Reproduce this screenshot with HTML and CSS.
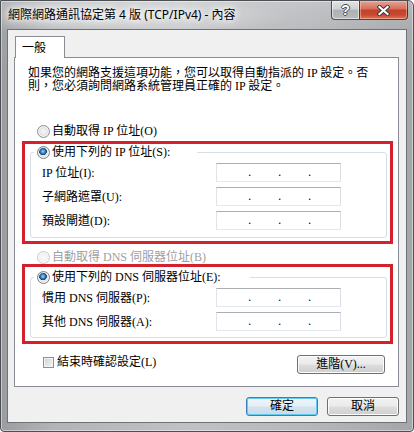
FILE: index.html
```html
<!DOCTYPE html>
<html lang="zh-Hant">
<head>
<meta charset="utf-8">
<title>網際網路通訊協定第 4 版 (TCP/IPv4) - 內容</title>
<link rel="stylesheet" href="styles.css">
</head>
<body>
<div class="window">
  <div class="titlebar">
    <div class="title">網際網路通訊協定第 4 版 (TCP/IPv4) - 內容</div>
    <div class="caption">
      <div class="cbtn help">?</div>
      <div class="cbtn close">
        <svg width="13" height="11" viewBox="0 0 13 11" aria-hidden="true">
          <path d="M2.5 2 L10.5 9 M10.5 2 L2.5 9" stroke="#3a3a3a" stroke-width="4.2" stroke-linecap="square" fill="none"/>
          <path d="M2.5 2 L10.5 9 M10.5 2 L2.5 9" stroke="#ffffff" stroke-width="2.2" stroke-linecap="square" fill="none"/>
        </svg>
      </div>
    </div>
  </div>
  <div class="client">
    <div class="tabs"><div class="tab">一般</div></div>
    <div class="panel">
      <p class="desc">如果您的網路支援這項功能，您可以取得自動指派的 IP 設定。否<br>則，您必須詢問網路系統管理員正確的 IP 設定。</p>

      <div class="opt first"><span class="radio"></span><span>自動取得 IP 位址(O)</span></div>

      <div class="mark mark-ip">
        <div class="group group-ip">
          <div class="legend legend-ip"><span class="radio on"></span><span>使用下列的 IP 位址(S):</span></div>
          <div class="fields">
            <span class="flabel">IP 位址(I):</span>
            <span class="ip"><span class="seg s1"></span><span class="dot">.</span><span class="seg"></span><span class="dot">.</span><span class="seg"></span><span class="dot">.</span><span class="seg"></span></span>
            <span class="flabel">子網路遮罩(U):</span>
            <span class="ip"><span class="seg s1"></span><span class="dot">.</span><span class="seg"></span><span class="dot">.</span><span class="seg"></span><span class="dot">.</span><span class="seg"></span></span>
            <span class="flabel">預設閘道(D):</span>
            <span class="ip"><span class="seg s1"></span><span class="dot">.</span><span class="seg"></span><span class="dot">.</span><span class="seg"></span><span class="dot">.</span><span class="seg"></span></span>
          </div>
        </div>
      </div>

      <div class="opt dns-auto disabled"><span class="radio"></span><span>自動取得 DNS 伺服器位址(B)</span></div>

      <div class="mark mark-dns">
        <div class="group group-dns">
          <div class="legend legend-dns"><span class="radio on"></span><span>使用下列的 DNS 伺服器位址(E):</span></div>
          <div class="fields">
            <span class="flabel">慣用 DNS 伺服器(P):</span>
            <span class="ip"><span class="seg s1"></span><span class="dot">.</span><span class="seg"></span><span class="dot">.</span><span class="seg"></span><span class="dot">.</span><span class="seg"></span></span>
            <span class="flabel">其他 DNS 伺服器(A):</span>
            <span class="ip"><span class="seg s1"></span><span class="dot">.</span><span class="seg"></span><span class="dot">.</span><span class="seg"></span><span class="dot">.</span><span class="seg"></span></span>
          </div>
        </div>
      </div>

      <div class="bottomrow">
        <div class="check"><span class="box"></span><span>結束時確認設定(L)</span></div>
        <div class="btn adv">進階(V)...</div>
      </div>
    </div>
    <div class="actions">
      <div class="btn default">確定</div>
      <div class="btn">取消</div>
    </div>
  </div>
</div>
</body>
</html>
```
FILE: styles.css
```css
* { box-sizing: border-box; }

html, body {
  margin: 0;
  padding: 0;
  background: #ffffff;
}

body {
  font-family: "Liberation Serif", "Noto Sans CJK TC", serif;
  font-size: 12px;
  color: #000;
}

/* ---------- window frame ---------- */
.window {
  width: 414px;
  height: 432px;
  display: flex;
  flex-direction: column;
  border: 1px solid #4c4f54;
  border-radius: 0 6px 4px 4px;
  background:
    radial-gradient(ellipse 170px 22px at 120px 15px, rgba(255,255,255,0.45), rgba(255,255,255,0) 100%),
    linear-gradient(180deg, rgba(255,255,255,0.2) 0px, rgba(255,255,255,0.05) 30px, rgba(255,255,255,0) 80px),
    linear-gradient(90deg, #9a9c9f 0%, #b1b3b6 12%, #bfc1c4 45%, #b5b7ba 75%, #a4a6a9 100%);
  box-shadow: inset 0 0 0 1px rgba(255,255,255,0.45);
  overflow: hidden;
}

.titlebar {
  height: 28px;
  flex: none;
  display: flex;
  justify-content: space-between;
  align-items: flex-start;
}

.title {
  margin: 6px 0 0 7px;
  font-family: "Noto Sans", "Noto Sans CJK TC", sans-serif;
  font-size: 12px;
  line-height: 16px;
  white-space: nowrap;
  color: #000;
  text-shadow: 0 0 5px #fff, 0 0 9px #fff, 0 0 13px rgba(255,255,255,0.8);
}

.caption {
  display: flex;
  margin-right: 5px;
  height: 19px;
}

.cbtn {
  height: 19px;
  display: flex;
  align-items: center;
  justify-content: center;
  border: 1px solid rgba(45,45,45,0.8);
  border-top: none;
}

.help {
  width: 28px;
  border-right: none;
  border-radius: 0 0 0 4px;
  background: linear-gradient(180deg, #e2e3e4 0%, #cfd1d3 45%, #aeb1b4 52%, #b9bcbf 100%);
  box-shadow: inset 0 0 0 1px rgba(255,255,255,0.55);
  color: #fff;
  font: bold 14px/17px "Liberation Sans", sans-serif;
  text-shadow: 1px 0 0 #4a4a4a, -1px 0 0 #4a4a4a, 0 1px 0 #4a4a4a, 0 -1px 0 #4a4a4a;
}

.close {
  width: 49px;
  border-radius: 0 0 4px 0;
  background: linear-gradient(180deg, #e3a395 0%, #d6725d 42%, #c2412b 52%, #c84a31 78%, #dc7a58 100%);
  box-shadow: inset 0 0 0 1px rgba(255,215,200,0.45);
}

.close svg { display: block; }

/* ---------- client area ---------- */
.client {
  flex: 1;
  margin: 0 6px 8px 6px;
  border: 1px solid #6e7176;
  background: #f0f0f0;
  display: flex;
  flex-direction: column;
  padding: 0 7px 6px 6px;
}

.tabs {
  display: flex;
  padding-top: 6px;
}

.tab {
  position: relative;
  z-index: 1;
  margin-left: 1px;
  margin-bottom: -1px;
  width: 50px;
  height: 22px;
  padding: 0 6px;
  border: 1px solid #898c95;
  border-bottom: none;
  background: #fff;
  font-family: "Noto Sans CJK TC", sans-serif;
  line-height: 20px;
}

.panel {
  border: 1px solid #898c95;
  background: #fff;
  padding: 9px 5px 12px 7px;
  display: flex;
  flex-direction: column;
}

.desc {
  margin: 0 0 0 6px;
  line-height: 13px;
  white-space: nowrap;
}

/* ---------- radio options ---------- */
.opt {
  display: flex;
  align-items: center;
  gap: 2px;
  height: 13px;
  line-height: 13px;
  padding-left: 15px;
  white-space: nowrap;
}

.opt.first { margin-top: 32px; }
.opt.dns-auto { margin-top: 7px; }
.opt.disabled { color: #a0a0a0; }

.radio {
  flex: none;
  width: 13px;
  height: 13px;
  border-radius: 50%;
  border: 1px solid #8f9091;
  background: radial-gradient(circle at 50% 50%, #f7f7f7 0, #e6e6e6 45%, #cfcfcf 100%);
  box-shadow: inset 0 0 0 1px rgba(255,255,255,0.7);
}

.radio.on {
  border-color: #7d8387;
  background:
    radial-gradient(circle at 45% 40%, #a8d4f5 0, #4c97d6 1.6px, #1c5d98 3px, #133f66 3.6px, rgba(19,63,102,0) 4.1px),
    radial-gradient(circle at 50% 50%, #f7f7f7 0, #e6e6e6 45%, #cfcfcf 100%);
}

.disabled .radio {
  border-color: #c9c9c9;
  background: radial-gradient(circle, #fafafa 0, #f0f0f0 60%, #e4e4e4 100%);
}

/* ---------- red annotation boxes ---------- */
.mark {
  border: 3px solid #d3222c;
  margin: 0;
  padding: 0 3px 3px 5px;
}

.mark-ip {
  margin-top: 3px;
  padding-top: 8px;
}

.mark-dns {
  margin-top: 0;
  padding-top: 10px;
}

/* ---------- group boxes ---------- */
.group {
  border: 1px solid #d5dfe5;
  border-radius: 3px;
  padding: 0 0 7px 11px;
}

.group-dns { padding-bottom: 6px; }

.legend {
  display: flex;
  align-items: center;
  gap: 2px;
  height: 14px;
  line-height: 14px;
  margin: -8px 0 0 -8px;
  padding-left: 3px;
  background: #fff;
  white-space: nowrap;
}

.legend-ip { width: 163px; }
.legend-dns { width: 216px; }

.fields {
  display: grid;
  grid-template-columns: 174px 125px;
  grid-auto-rows: 19px;
  row-gap: 5px;
  margin-top: 4px;
  align-items: center;
}

.flabel {
  white-space: nowrap;
  line-height: 14px;
}

.ip {
  display: flex;
  height: 19px;
  border: 1px solid;
  border-color: #abadb3 #dbdfe6 #e3e9ef #e2e3ea;
  background: #fff;
  font-family: "Liberation Sans", sans-serif;
  font-size: 12px;
  line-height: 17px;
}

.seg { width: 27px; flex: none; }
.seg.s1 { width: 31px; }
.dot { width: 3px; flex: none; text-align: center; }

/* ---------- bottom row ---------- */
.bottomrow {
  display: flex;
  justify-content: space-between;
  align-items: flex-start;
  margin-top: 11px;
  padding: 0 8px 0 21px;
}

.check {
  display: flex;
  align-items: center;
  gap: 3px;
  margin-top: 1px;
  height: 13px;
  line-height: 13px;
  white-space: nowrap;
}

.box {
  width: 11px;
  height: 11px;
  flex: none;
  border: 1px solid #8f8f8f;
  background: linear-gradient(135deg, #cfcfcf 0%, #e4e4e4 50%, #f4f4f4 100%);
  box-shadow: inset 0 0 0 1px #f4f4f4;
}

.btn {
  height: 19px;
  width: 72px;
  border: 1px solid #707070;
  border-radius: 3px;
  background: linear-gradient(180deg, #f2f2f2 0%, #ebebeb 48%, #dddddd 52%, #cfcfcf 100%);
  box-shadow: inset 0 0 0 1px #fcfcfc;
  display: flex;
  align-items: center;
  justify-content: center;
  line-height: 17px;
  white-space: nowrap;
}

.btn.adv { width: 88px; }

.btn.default {
  border-color: #3c7fb1;
  background: linear-gradient(180deg, #eef6fb 0%, #e3eff7 48%, #d3e4ef 52%, #c8dbe8 100%);
  box-shadow: inset 0 0 0 1px #63cbf2;
}

.actions {
  display: flex;
  justify-content: flex-end;
  gap: 9px;
  margin-top: 10px;
}
```
